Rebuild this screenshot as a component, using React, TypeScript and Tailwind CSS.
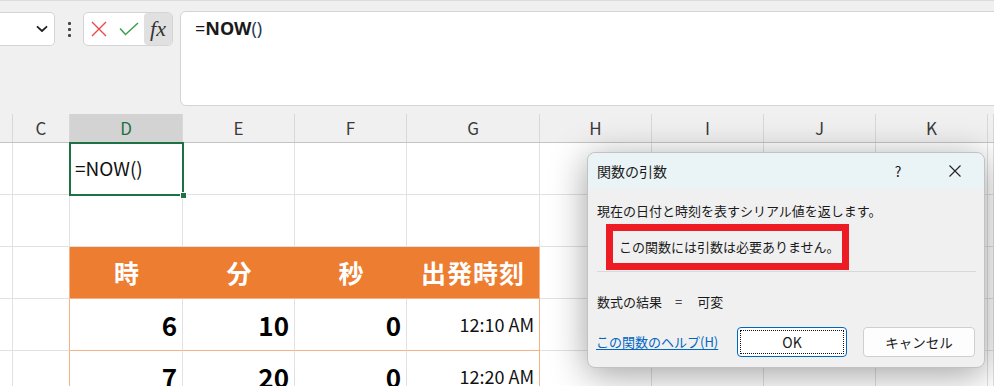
import React from "react";

const COLS = "grid grid-cols-[13px_57px_113px_112px_112px_133px_112px_112px_112px_112px_6px]";
const SHEET_FONT = { fontFamily: '"Noto Sans CJK JP", "Noto Sans", sans-serif' };
const UI_FONT = { fontFamily: '"Noto Sans CJK JP", "Noto Sans", sans-serif' };

function Chevron() {
  return (
    <svg width="12" height="8" viewBox="0 0 12 8" fill="none">
      <path d="M1.5 1.8 L6 6 L10.5 1.8" stroke="#222" strokeWidth="1.8" strokeLinecap="round" strokeLinejoin="round" />
    </svg>
  );
}

function Cell({ className = "", children }: { className?: string; children?: React.ReactNode }) {
  return <div className={"border-r border-b border-[#e1e1e1] " + className}>{children}</div>;
}

export default function App() {
  const letters = ["", "C", "D", "E", "F", "G", "H", "I", "J", "K", ""];
  return (
    <div className="relative w-[994px] h-[386px] overflow-hidden bg-[#f0f0f0]" style={SHEET_FONT}>
      {/* Toolbar / formula bar */}
      <div className="h-[105px] flex items-start pt-[10px] border-t border-[#dcdcdc]">
        <div className="mt-[1px] w-[55px] h-[34px] bg-white border border-l-0 border-[#d4d4d4] rounded-r-[5px] flex items-center justify-end pr-[6px]">
          <Chevron />
        </div>
        <div className="w-[28px] h-[36px] flex flex-col items-center justify-center gap-[3px]">
          <span className="w-[3px] h-[3px] bg-[#444] rounded-[1px]" />
          <span className="w-[3px] h-[3px] bg-[#444] rounded-[1px]" />
          <span className="w-[3px] h-[3px] bg-[#444] rounded-[1px]" />
        </div>
        <div className="mt-[1px] w-[90px] h-[34px] bg-white border border-[#d4d4d4] rounded-[5px] flex items-stretch overflow-hidden">
          <div className="w-[29px] flex items-center justify-center">
            <svg width="16" height="16" viewBox="0 0 16 16">
              <path d="M1 1 L15 15 M15 1 L1 15" stroke="#e8484a" strokeWidth="1.4" />
            </svg>
          </div>
          <div className="w-[31px] flex items-center justify-center">
            <svg width="20" height="14" viewBox="0 0 20 14">
              <path d="M1 6.5 L6.5 12.5 L19 1" stroke="#3aa04c" strokeWidth="1.5" fill="none" />
            </svg>
          </div>
          <div className="flex-1 bg-[#e0e0e0] rounded-[4px] flex items-center justify-center">
            <span className="text-[22px] italic text-[#333] leading-none" style={{ fontFamily: '"Liberation Serif", "DejaVu Serif", serif' }}>
              fx
            </span>
          </div>
        </div>
        <div className="ml-[7px] flex-1 mr-[-10px] h-[95px] bg-white border border-[#d4d4d4] rounded-[6px] pl-[14px] pt-[3px]">
          <span className="text-[18px] text-[#1a1a1a]" style={{ fontFamily: '"Noto Sans", "Open Sans", sans-serif' }}>
            =<span className="font-bold">NOW</span>
            <span className="text-[#2b3a55]">()</span>
          </span>
        </div>
      </div>

      {/* Column headers */}
      <div className={COLS + " h-[38px] items-end border-b border-[#c4c4c4]"}>
        {letters.map((l, i) => (
          <div
            key={i}
            className={
              "h-[28px] flex items-center justify-center text-[17px] border-r border-[#d8d8d8] " +
              (l === "D" ? "bg-[#d3d3d3] text-[#1e7145]" : "text-[#3a3a3a]")
            }
          >
            {l}
          </div>
        ))}
      </div>

      {/* Sheet body */}
      <div className={COLS + " auto-rows-[52px] bg-white"}>
        {/* row 1 */}
        <Cell />
        <Cell />
        <Cell className="flex items-center pl-[5px] text-[19px] text-[#111]">=NOW()</Cell>
        <Cell />
        <Cell />
        <Cell />
        <Cell />
        <Cell />
        <Cell />
        <Cell />
        <Cell />
        {/* row 2 */}
        <Cell />
        <Cell />
        <Cell />
        <Cell />
        <Cell />
        <Cell />
        <Cell />
        <Cell />
        <Cell />
        <Cell />
        <Cell />
        {/* row 3: orange header */}
        <Cell />
        <Cell className="!border-r-[#f4b183]" />
        <div className="bg-[#ed7d31] border-b border-[#f4b183] flex items-center justify-center text-white font-bold text-[25px]">時</div>
        <div className="bg-[#ed7d31] border-b border-[#f4b183] flex items-center justify-center text-white font-bold text-[25px]">分</div>
        <div className="bg-[#ed7d31] border-b border-[#f4b183] flex items-center justify-center text-white font-bold text-[25px]">秒</div>
        <div className="bg-[#ed7d31] border-b border-r border-[#f4b183] flex items-center justify-center text-white font-bold text-[25px] tracking-[1px]">出発時刻</div>
        <Cell />
        <Cell />
        <Cell />
        <Cell />
        <Cell />
        {/* rows 4,5: data */}
        {[
          ["6", "10", "0", "12:10 AM"],
          ["7", "20", "0", "12:20 AM"],
        ].map((r, ri) => (
          <React.Fragment key={ri}>
            <Cell />
            <Cell className="!border-r-[#f4b183]" />
            <div className="border-r border-[#e1e1e1] border-b border-b-[#f4b183] flex items-center justify-end pr-[5px] font-bold text-[26px] text-black">{r[0]}</div>
            <div className="border-r border-[#e1e1e1] border-b border-b-[#f4b183] flex items-center justify-end pr-[5px] font-bold text-[26px] text-black">{r[1]}</div>
            <div className="border-r border-[#e1e1e1] border-b border-b-[#f4b183] flex items-center justify-end pr-[5px] font-bold text-[26px] text-black">{r[2]}</div>
            <div className="border-r border-b border-[#f4b183] flex items-center justify-end pr-[5px] text-[18px] text-[#111]">{r[3]}</div>
            <Cell />
            <Cell />
            <Cell />
            <Cell />
            <Cell />
          </React.Fragment>
        ))}
      </div>

      {/* selection border on D1 */}
      <div className="absolute left-[69px] top-[142px] w-[115px] h-[54px] border-2 border-[#1e7145] pointer-events-none" />
      <div className="absolute left-[180px] top-[192px] w-[7px] h-[7px] bg-[#1e7145] border border-white" />

      {/* Dialog */}
      <div
        className="absolute left-[587px] top-[152px] w-[398px] h-[216px] rounded-[8px] border border-[#c2c2c2] bg-[#f0f0f0] shadow-[0_6px_36px_rgba(0,0,0,0.38)] flex flex-col text-[#1a1a1a]"
        style={UI_FONT}
      >
        <div className="h-[36px] bg-[#eaf3f6] rounded-t-[8px] flex items-center pl-[9px]">
          <span className="flex-1 text-[14px]">関数の引数</span>
          <span className="w-[40px] text-center text-[14px]">?</span>
          <span className="w-[14px]" />
          <span className="w-[46px] flex items-center justify-center">
            <svg width="12" height="12" viewBox="0 0 12 12">
              <path d="M0.5 0.5 L11.5 11.5 M11.5 0.5 L0.5 11.5" stroke="#222" strokeWidth="1.1" />
            </svg>
          </span>
          <span className="w-[6px]" />
        </div>
        <div className="mt-[13px] pl-[9px] text-[13px] leading-[18px]">現在の日付と時刻を表すシリアル値を返します。</div>
        <div className="mt-[4px] ml-[18px] w-[243px] h-[46px] border-[7px] border-[#ed1c24] flex items-center pl-[6px] text-[13px]">
          この関数には引数は必要ありません。
        </div>
        <div className="mt-[1px] ml-[9px] mr-[8px] h-px bg-[#d9d9d9]" />
        <div className="mt-[21px] pl-[9px] text-[13px] leading-[18px] flex">
          <span>数式の結果</span>
          <span className="ml-[13px]">=</span>
          <span className="ml-[15px]">可変</span>
        </div>
        <div className="mt-[16px] flex items-center pl-[8px]">
          <span className="text-[13px] text-[#0067c0] underline underline-offset-[2px] w-[141px] whitespace-nowrap">この関数のヘルプ(H)</span>
          <div className="w-[110px] h-[30px] rounded-[4px] border border-[#0067c0] bg-white p-[2px]">
            <div className="w-full h-full border border-dotted border-[#111] flex items-center justify-center text-[14px]">OK</div>
          </div>
          <div className="ml-[16px] w-[112px] h-[30px] rounded-[4px] border border-[#cfcfcf] bg-[#fdfdfd] flex items-center justify-center text-[13.5px]">
            キャンセル
          </div>
        </div>
      </div>
    </div>
  );
}
